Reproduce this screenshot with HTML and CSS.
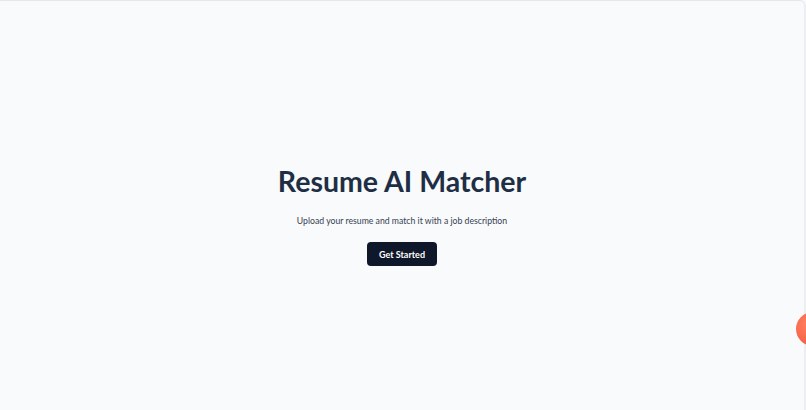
FILE: index.html
```html
<!DOCTYPE html>
<html lang="en">
<head>
<meta charset="utf-8">
<title>Resume AI Matcher</title>
<link rel="stylesheet" href="styles.css">
</head>
<body>
<div class="frame">
  <main class="hero">
    <h1 class="title">Resume AI Matcher</h1>
    <p class="subtitle">Upload your resume and match it with a job description</p>
    <button class="cta">Get Started</button>
  </main>
  <div class="blob"></div>
</div>
</body>
</html>
```

FILE: styles.css
```css
html, body {
  margin: 0;
  padding: 0;
  height: 100%;
  background: #f8fafc;
  overflow: hidden;
}
.frame {
  position: relative;
  height: 410px;
  box-sizing: border-box;
  border-top: 1px solid #e5e7eb;
  border-right: 2px solid #eceef1;
  border-top-right-radius: 6px;
  display: flex;
  align-items: center;
  justify-content: center;
  font-family: Lato, "Noto Sans", sans-serif;
}
.hero {
  display: flex;
  flex-direction: column;
  align-items: center;
  margin-top: 18px;
}
.title {
  margin: 0;
  font-size: 28.5px;
  font-weight: 700;
  color: #1e2f45;
  line-height: 36px;
}
.subtitle {
  margin: 14px 0 0;
  font-size: 8.7px;
  color: #374151;
  line-height: 16px;
}
.cta {
  margin-top: 13px;
  width: 70px;
  height: 24px;
  padding: 0;
  border: none;
  border-radius: 4px;
  background: #0f172a;
  color: #fff;
  font-family: inherit;
  font-size: 9px;
  font-weight: 700;
}
.blob {
  position: absolute;
  left: 796px;
  top: 311px;
  width: 34px;
  height: 34px;
  border-radius: 50%;
  background: radial-gradient(circle at 35% 35%, #ff7f5e, #f0523c);
}
```
